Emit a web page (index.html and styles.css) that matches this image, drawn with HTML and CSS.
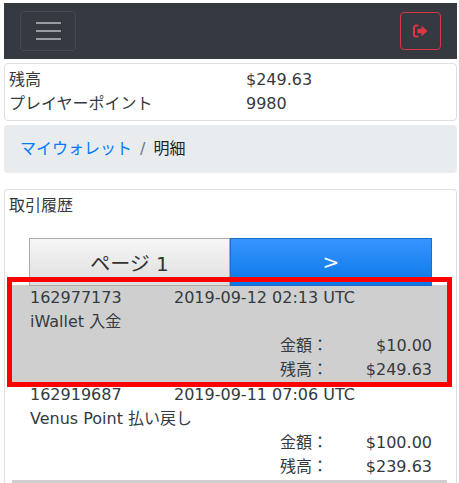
FILE: index.html
```html
<!DOCTYPE html>
<html lang="ja">
<head>
    <meta charset="utf-8">
    <title>明細</title>
    <link rel="stylesheet" href="styles.css">
</head>
<body>
    <nav class="navbar">
        <button type="button" class="toggler">
            <span class="toggler-bar"></span>
            <span class="toggler-bar"></span>
            <span class="toggler-bar"></span>
        </button>
        <button type="button" class="logout">
            <svg width="15" height="14" viewBox="0 0 15 14">
                <path d="M5.5 1.5H3A2 2 0 0 0 1 3.5v7a2 2 0 0 0 2 2h2.5" fill="none" stroke="#dc3545" stroke-width="2"/>
                <path d="M4.5 4.8H8.5V1.6L14.5 7L8.5 12.4V9.2H4.5z" fill="#dc3545"/>
            </svg>
        </button>
    </nav>

    <div class="card balance">
        <div class="balance-row"><span>残高</span><span>$249.63</span></div>
        <div class="balance-row"><span>プレイヤーポイント</span><span>9980</span></div>
    </div>

    <div class="breadcrumb">
        <a href="#">マイウォレット</a>
        <span class="divider">/</span>
        <span>明細</span>
    </div>

    <div class="card history">
        <div class="history-title">取引履歴</div>
        <div class="pager">
            <button type="button" class="pager-page">ページ 1</button>
            <button type="button" class="pager-next">&gt;</button>
        </div>

        <div class="tx tx-active">
            <div class="tx-head"><span class="tx-id">162977173</span><span>2019-09-12 02:13 UTC</span></div>
            <div>iWallet 入金</div>
            <div class="tx-sum"><span>金額：</span><span class="tx-value">$10.00</span></div>
            <div class="tx-sum"><span>残高：</span><span class="tx-value">$249.63</span></div>
        </div>

        <div class="tx">
            <div class="tx-head"><span class="tx-id">162919687</span><span>2019-09-11 07:06 UTC</span></div>
            <div>Venus Point 払い戻し</div>
            <div class="tx-sum"><span>金額：</span><span class="tx-value">$100.00</span></div>
            <div class="tx-sum"><span>残高：</span><span class="tx-value">$239.63</span></div>
        </div>

        <div class="tx-rule"></div>
        <div class="highlight"></div>
    </div>
</body>
</html>
```

FILE: styles.css
```css
html, body {
    height: 483px;
    overflow: hidden;
}
body {
    margin: 0;
    padding: 3px 2px 0 4px;
    background-color: #fff;
    color: #343a40;
    font-family: "DejaVu Sans", "Noto Sans CJK JP", sans-serif;
    font-size: 16px;
    line-height: 24px;
}
.navbar {
    height: 56px;
    display: flex;
    justify-content: space-between;
    align-items: center;
    padding: 0 16px;
    background-color: #343a40;
}
.toggler {
    width: 56px;
    height: 40px;
    display: flex;
    flex-direction: column;
    justify-content: center;
    align-items: center;
    gap: 6px;
    padding: 0;
    background: none;
    border: 1px solid #454b52;
    border-radius: 4px;
}
.toggler-bar {
    width: 25px;
    height: 2px;
    background-color: #9a9da0;
}
.logout {
    width: 41px;
    height: 38px;
    display: flex;
    justify-content: center;
    align-items: center;
    padding: 0;
    background: none;
    border: 1px solid #dc3545;
    border-radius: 4px;
}
.card {
    border: 1px solid #dfdfdf;
    border-radius: 4px;
    background-color: #fff;
}
.balance {
    margin-top: 4px;
    padding: 4px;
}
.balance-row {
    display: grid;
    grid-template-columns: 237px 1fr;
}
.breadcrumb {
    height: 48px;
    margin: 4px 0 16px;
    padding: 0 16px;
    display: flex;
    align-items: center;
    gap: 8px;
    background-color: #e9ecef;
    border-radius: 4px;
    color: #212529;
}
.breadcrumb a {
    color: #007bff;
    text-decoration: none;
}
.divider {
    color: #6c757d;
}
.history {
    position: relative;
    height: 310px;
    padding: 4px 0 0;
    border-bottom: 0;
}
.history-title {
    padding-left: 4px;
}
.pager {
    display: grid;
    grid-template-columns: 201px 1fr;
    margin: 20px 24px 0;
    height: 48px;
}
.pager button {
    font-family: "DejaVu Sans", "Noto Sans CJK JP", sans-serif;
    font-size: 20px;
    padding: 0;
}
.pager-page {
    background: linear-gradient(#f6f6f6, #dedede);
    border: 1px solid #ababab;
    color: #333;
}
.pager-next {
    background: linear-gradient(#3795ff, #0a78e6);
    border: 1px solid #1a6fc9;
    color: #fff;
}
.tx {
    margin: 0 9px 0 7px;
    padding: 1px 15px 0 18px;
    height: 97px;
    box-sizing: border-box;
}
.tx-active {
    margin-top: -1px;
    background-color: #cfcfcf;
}
.tx-head {
    display: flex;
}
.tx-id {
    width: 144px;
}
.tx-sum {
    display: flex;
    justify-content: flex-end;
}
.tx-value {
    width: 100px;
    text-align: right;
}
.tx-sum span:first-child {
    flex: 1;
    padding-left: 250px;
}
.tx-rule {
    height: 3px;
    margin: 1px 9px 0 7px;
    background-color: #cfcfcf;
}
.highlight {
    position: absolute;
    left: 2px;
    top: 87px;
    width: 445px;
    height: 110px;
    box-sizing: border-box;
    border: 5px solid #f00;
}
```
